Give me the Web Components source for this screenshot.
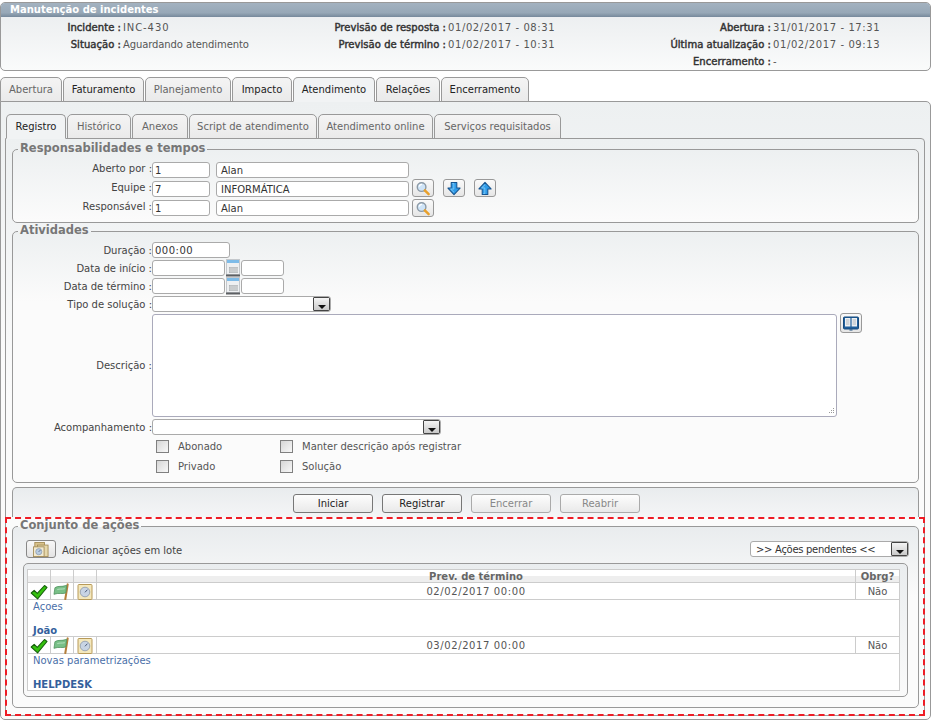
<!DOCTYPE html>
<html lang="pt">
<head>
<meta charset="utf-8">
<title>Manutenção de incidentes</title>
<style>
  html, body { margin: 0; background: #fff; }
  body { font: 10px "DejaVu Sans", Verdana, sans-serif; color: #444; }
  .gap6 { margin-left: 6px; }
  .gap3 { margin-left: 3px; }
  .gap9 { margin-left: 9px; }
  .up2 { margin-top: -2px; }
  .up1 { margin-top: -1px; }
  .num { letter-spacing: .6px; }
  form-row.tall { --row: 18px; }
</style>
</head>
<body>

<incident-page>
  <incident-header title="Manutenção de incidentes">
    <info-item label="Incidente" style="letter-spacing:.9px">INC-430</info-item>
    <info-item label="Previsão de resposta" class="num">01/02/2017 - 08:31</info-item>
    <info-item label="Abertura" class="num">31/01/2017 - 17:31</info-item>
    <info-item label="Situação" style="letter-spacing:-.1px">Aguardando atendimento</info-item>
    <info-item label="Previsão de término" class="num">01/02/2017 - 10:31</info-item>
    <info-item label="Última atualização" class="num">01/02/2017 - 09:13</info-item>
    <info-item></info-item>
    <info-item></info-item>
    <info-item label="Encerramento">-</info-item>
  </incident-header>

  <tab-strip style="margin-top:6px">
    <tab-item style="width:62px" muted>Abertura</tab-item>
    <tab-item style="width:81px">Faturamento</tab-item>
    <tab-item style="width:86px" muted>Planejamento</tab-item>
    <tab-item style="width:60px">Impacto</tab-item>
    <tab-item style="width:82px" active>Atendimento</tab-item>
    <tab-item style="width:64px">Relações</tab-item>
    <tab-item style="width:88px">Encerramento</tab-item>
  </tab-strip>

  <tab-panel outer>
    <tab-strip style="margin-left:1px">
      <tab-item style="width:60px" active>Registro</tab-item>
      <tab-item style="width:64px" muted>Histórico</tab-item>
      <tab-item style="width:56px" muted>Anexos</tab-item>
      <tab-item style="width:128px" muted>Script de atendimento</tab-item>
      <tab-item style="width:115px" muted>Atendimento online</tab-item>
      <tab-item style="width:127px" muted>Serviços requisitados</tab-item>
    </tab-strip>

    <tab-panel>
      <form-group legend="Responsabilidades e tempos" style="--pad:5px 6px 3px 0;--align:flex-start;--ll:14px">
        <form-row label="Aberto por">
          <text-box style="width:58px">1</text-box>
          <text-box class="gap6" style="width:193px;--ind:4px">Alan</text-box>
        </form-row>
        <form-row label="Equipe">
          <text-box style="width:58px">7</text-box>
          <text-box class="gap6" style="width:193px;--ind:4px">INFORMÁTICA</text-box>
          <icon-button class="gap3 up2" icon="search"></icon-button>
          <icon-button class="gap9 up2" icon="down"></icon-button>
          <icon-button class="gap9 up2" icon="up"></icon-button>
        </form-row>
        <form-row label="Responsável">
          <text-box style="width:58px">1</text-box>
          <text-box class="gap6" style="width:193px;--ind:4px">Alan</text-box>
          <icon-button class="gap3 up1" icon="search"></icon-button>
        </form-row>
      </form-group>

      <form-group legend="Atividades" style="margin-top:1px;--pad:2px 6px 6px 0">
        <form-row class="tall" label="Duração"><text-box style="width:78px;letter-spacing:.5px">000:00</text-box></form-row>
        <form-row class="tall" label="Data de início">
          <text-box style="width:73px"></text-box>
          <ui-icon name="calendar" style="width:14px;height:18px;margin-left:1px"></ui-icon>
          <text-box style="width:43px;margin-left:1px"></text-box>
        </form-row>
        <form-row class="tall" label="Data de término">
          <text-box style="width:73px"></text-box>
          <ui-icon name="calendar" style="width:14px;height:18px;margin-left:1px"></ui-icon>
          <text-box style="width:43px;margin-left:1px"></text-box>
        </form-row>
        <form-row class="tall" label="Tipo de solução"><select-box style="width:179px"></select-box></form-row>
        <form-row label="Descrição" style="--row:105px">
          <memo-box style="width:685px"></memo-box>
          <icon-button icon="book" style="margin:0 0 0 3px;align-self:flex-start;height:20px"></icon-button>
        </form-row>
        <form-row class="tall" label="Acompanhamento"><select-box style="width:289px"></select-box></form-row>
        <check-grid>
          <check-item>Abonado</check-item>
          <check-item>Manter descrição após registrar</check-item>
          <check-item>Privado</check-item>
          <check-item>Solução</check-item>
        </check-grid>
      </form-group>

      <button-bar>
        <push-button>Iniciar</push-button>
        <push-button>Registrar</push-button>
        <push-button disabled>Encerrar</push-button>
        <push-button disabled>Reabrir</push-button>
      </button-bar>

      <highlight-frame>
        <form-group legend="Conjunto de ações" style="--pad:6px 10px 10px 10px;--lm:-5px;--top:#e9ecee">
          <action-toolbar></action-toolbar>
          <action-table>
            <action-row date="02/02/2017 00:00" required="Não" desc="Açoes" owner="João"></action-row>
            <action-row date="03/02/2017 00:00" required="Não" desc="Novas parametrizações" owner="HELPDESK"></action-row>
          </action-table>
        </form-group>
      </highlight-frame>
    </tab-panel>
  </tab-panel>
</incident-page>

<script>
// small helper, every element gets its own open shadow root
function define(name, css, html) {
  customElements.define(name, class extends HTMLElement {
    connectedCallback() {
      if (this.shadowRoot) return;
      const root = this.attachShadow({ mode: 'open' });
      const body = typeof html === 'function' ? html(this) : html;
      root.innerHTML = '<style>:host,*{box-sizing:border-box}' + css + '</style>' + body;
    }
  });
}

const ICONS = {
  search: `<svg viewBox="0 0 16 16"><circle cx="6.5" cy="6.5" r="4.6" fill="#cfe4f7" stroke="#8c9aa6" stroke-width="1.5"/><path d="M4 6a3 3 0 0 1 3-2.4" fill="none" stroke="#fff" stroke-width="1.2"/><path d="M10 10l4 4" stroke="#e8a02c" stroke-width="2.6" stroke-linecap="round"/></svg>`,
  down: `<svg viewBox="0 0 16 16"><path d="M5 1.5h6v6h3.5L8 14.5 1.5 7.5H5z" fill="#2f9be8" stroke="#14538f" stroke-width="1.1" stroke-linejoin="round"/><path d="M6.2 2.6h1.6v6H4.4L8 12" fill="none" stroke="#8fd0f7" stroke-width=".8"/></svg>`,
  up: `<svg viewBox="0 0 16 16"><path d="M5 14.5h6v-6h3.5L8 1.5 1.5 8.5H5z" fill="#2f9be8" stroke="#14538f" stroke-width="1.1" stroke-linejoin="round"/><path d="M6.2 13.4h1.6v-6H4.4L8 4" fill="none" stroke="#8fd0f7" stroke-width=".8"/></svg>`,
  book: `<svg viewBox="0 0 16 14"><rect x=".5" y=".5" width="15" height="12" rx="1" fill="#1f5f9c" stroke="#174a7c"/><path d="M2 1.5h5.400v8.500H2zM8.600 1.500H14v8.500H8.600z" fill="#eef1f3"/><path d="M3 3.500h3.400M3 5.500h3.400M3 7.500h3.400M9.600 3.500H13M9.600 5.500H13M9.600 7.500H13" stroke="#a9b2ba" stroke-width=".9"/><path d="M6.500 13h3v1h-3z" fill="#174a7c"/></svg>`,
  calendar: `<svg viewBox="0 0 14 18"><rect x=".5" y=".5" width="13" height="15" fill="#eef0f2" stroke="#c4c8cc"/><rect x="1" y="1" width="12" height="3" fill="#7dbbe8"/><path d="M3 8h9v6H3z" fill="#aeb2b6"/><path d="M3 10h9M3 12h9M5 8v6M7 8v6M9 8v6M11 8v6" stroke="#e4e5e6" stroke-width=".6"/><rect y="15.500" width="14" height="2" fill="#5c5f62"/></svg>`,
  check: `<svg viewBox="0 0 18 16"><path d="M1.200 9l3-2.700 3.100 3L14.500 1.500 17 3.500 7.600 14.800z" fill="#35c20e" stroke="#17610c" stroke-width="1.100" stroke-linejoin="round"/></svg>`,
  flag: `<svg viewBox="0 0 18 18"><path d="M15 1.500l-2.500 15.500" stroke="#b57f3b" stroke-width="2.200" stroke-linecap="round"/><path d="M1.500 5c3.500-2.500 6.500-.4 12.500-2.500l-1 8c-4 1.600-7.500-.5-12.500 1.500z" fill="#79c088" stroke="#4d8f5b" stroke-width=".8"/><path d="M4 7c2.500-1 5-.2 8-1" stroke="#b7e0bf" stroke-width="1" fill="none"/></svg>`,
  clock: `<svg viewBox="0 0 16 16"><rect x="1" y=".5" width="14" height="15" rx="1" fill="#f4e8bd" stroke="#b89a58"/><circle cx="8" cy="8" r="4.800" fill="#c8d4e4" stroke="#8c98aa" stroke-width=".8"/><path d="M8 8.300l2.400-2.600" stroke="#4a5b78" stroke-width="1"/></svg>`,
  batch: `<svg viewBox="0 0 18 17"><rect x="2" y=".5" width="11" height="12" fill="#d9c28c" stroke="#a48c56"/><rect x="5" y="3.500" width="12" height="13" fill="#e6d8ac" stroke="#a48c56"/><rect x=".5" y="5.500" width="12" height="11" fill="#f2ead0" stroke="#a48c56"/><circle cx="6.500" cy="11" r="3.500" fill="#b8cbe0" stroke="#7f8fa5" stroke-width=".7"/><path d="M6.500 11l1.700-1.700" stroke="#3f4f6b"/></svg>`
};

define('ui-icon', ':host{display:inline-block;line-height:0;flex:none}svg{width:100%;height:100%;display:block}',
  el => ICONS[el.getAttribute('name')]);

define('incident-page', ':host{display:block;padding-top:2px;width:931px}', '<slot></slot>');

define('incident-header', `
  :host{display:block;height:69px;border:1px solid #999;border-radius:5px;overflow:hidden;
    background:linear-gradient(#e9ecee,#fafbfb)}
  h1{margin:0;height:14px;padding:0 0 0 9px;font:bold 10px/14px "DejaVu Sans",sans-serif;color:#fff;
    background:linear-gradient(#a3b2c0 0,#97a8b7 70%,#76899b 100%)}
  .grid{display:grid;grid-template-columns:325px 325px 1fr;padding-top:2px}
`, el => `<h1>${el.getAttribute('title')}</h1><div class="grid"><slot></slot></div>`);

define('info-item', `
  :host{display:grid;grid-template-columns:120px 1fr;column-gap:2px;height:17px;line-height:17px;white-space:nowrap;color:#555}
  b{justify-self:end;color:#333;font-weight:normal;letter-spacing:.05px;-webkit-text-stroke:.45px #333}
`, el => el.hasAttribute('label') ? `<b>${el.getAttribute('label')} :</b><span><slot></slot></span>` : '');

define('tab-strip', ':host{display:flex;gap:1px;height:24px;position:relative;z-index:1}', '<slot></slot>');

define('tab-item', `
  :host{display:block;height:25px;border:1px solid #999;border-radius:5px 5px 0 0;
    background:linear-gradient(#f4f4f4,#eaeaea);text-align:center;line-height:24px;color:#222;white-space:nowrap}
  :host([muted]){color:#666}
  :host([active]){background:#f1f3f4;border-bottom-color:#f1f3f4;color:#222}
`, '<slot></slot>');

define('tab-panel', `
  :host{display:block;border:1px solid #999;border-radius:0 4px 4px 4px;
    background:linear-gradient(#edf0f1,#fbfbfb 260px);padding:3px 5px 0 6px;height:578px}
  :host([outer]){border-radius:0 5px 5px 5px;padding:12px 5px 0 4px;height:619px}
`, '<slot></slot>');

define('form-group', `
  :host{display:block}
  fieldset{margin:0;min-width:0;border:1px solid #999;border-radius:5px;padding:var(--pad,6px);
    background:linear-gradient(var(--top,#edf0f1),#fbfbfb 70px)}
  legend{margin-left:var(--lm,5px);padding:0 2px 3px;font:bold 11.5px/12px "DejaVu Sans",sans-serif;color:#777}
`, el => `<fieldset><legend>${el.getAttribute('legend')}</legend><slot></slot></fieldset>`);

define('form-row', `
  :host{display:flex;align-items:var(--align,center);height:var(--row,19px);white-space:nowrap}
  label{flex:none;width:139px;text-align:right;color:#444;line-height:var(--ll,normal)}
`, el => `<label>${el.getAttribute('label')} :</label><slot></slot>`);

define('text-box', `
  :host{display:block;flex:none;height:16px;border:1px solid #aaa;border-radius:3px;background:#fff;
    padding-left:var(--ind,2px);line-height:15px;color:#333;white-space:nowrap;overflow:hidden}
`, '<slot></slot>');

define('memo-box', `
  :host{display:block;flex:none;height:103px;border:1px solid #aab;border-radius:3px;background:#fff;position:relative}
  svg{position:absolute;right:1px;bottom:1px;width:8px;height:8px}
`, '<svg viewBox="0 0 8 8" fill="#999"><rect x="6" y="1" width="1" height="1"/><rect x="4" y="3" width="1" height="1"/><rect x="6" y="3" width="1" height="1"/><rect x="2" y="5" width="1" height="1"/><rect x="4" y="5" width="1" height="1"/><rect x="6" y="5" width="1" height="1"/></svg>');

define('select-box', `
  :host{display:flex;flex:none;height:16px;border:1px solid #aaa;border-radius:3px;background:#fff;
    padding-left:var(--ind,1px);line-height:15px;color:#333;overflow:hidden;white-space:nowrap}
  span{flex:1}
  i{flex:none;width:17px;height:14px;border:1px solid #444;border-radius:1px;background:linear-gradient(#f4f4f4,#c9c9c9);position:relative}
  i::after{content:"";position:absolute;left:4px;top:7px;border:4px solid transparent;border-top:4px solid #111;border-bottom:0}
`, '<span><slot></slot></span><i></i>');

define('icon-button', `
  :host{display:flex;flex:none;align-items:center;justify-content:center;width:22px;height:18px;
    border:1px solid #999;border-radius:3px;background:linear-gradient(#fafafa,#e6e6e6)}
  ui-icon{width:16px;height:15px}
`, el => `<ui-icon name="${el.getAttribute('icon')}"></ui-icon>`);

define('check-grid', `
  :host{display:grid;grid-template-columns:124px 1fr;margin:0 0 0 143px}
`, '<slot></slot>');

define('check-item', `
  :host{display:flex;align-items:center;height:20px;white-space:nowrap;color:#555}
  i{flex:none;width:13px;height:13px;margin-right:9px;border:1px solid #808080;background:linear-gradient(135deg,#d6d6d6,#f8f8f8)}
`, '<i></i><slot></slot>');

define('button-bar', `
  :host{display:flex;justify-content:center;gap:9px;height:30px;margin-top:4px;padding:6px 0 0 2px;
    border:1px solid #999;border-bottom:0;border-radius:5px 5px 0 0;background:linear-gradient(#e9ecee,#f4f5f6)}
`, '<slot></slot>');

define('push-button', `
  :host{display:block;width:80px;height:19px;border:1px solid #777;border-radius:3px;text-align:center;line-height:18px;color:#222;
    background:linear-gradient(#fdfdfd,#e9e9e9)}
  :host([disabled]){color:#888;border-color:#aaa}
`, '<slot></slot>');

define('highlight-frame', `
  :host{display:block;margin:0 -6px 0 -7px;height:199px;border:2px dashed #ee1c25;padding:0 4px 0 5px;position:relative}
`, '<slot></slot>');

define('action-toolbar', `
  :host{display:flex;align-items:center;height:18px;padding-left:3px;margin-right:-1px}
  button{all:unset;box-sizing:border-box;display:flex;align-items:center;justify-content:center;width:30px;height:18px;
    border:1px solid #888;border-radius:3px;background:linear-gradient(#f8f8f8,#e4e4e4)}
  ui-icon{width:16px;height:15px}
  span{margin-left:6px;padding-top:2px;flex:1;color:#444}
  select-box{width:159px;--ind:5px;letter-spacing:-.3px}
`, '<button><ui-icon name="batch"></ui-icon></button><span>Adicionar ações em lote</span><select-box>&gt;&gt; Ações pendentes &lt;&lt;</select-box>');

define('action-table', `
  :host{display:block;margin-top:5px;padding:5px 7px 5px 3px;border:1px solid #999;border-radius:5px;
    background:linear-gradient(#eaedef,#fafafa)}
  .box{border:1px solid #ccc;border-bottom:0;background:#fff}
  .head{display:grid;grid-template-columns:22px 23px 23px 1fr 44px;height:13px;border-bottom:1px solid #ccc;
    background:linear-gradient(#fff 0,#fff 50%,#eee 50%);font-weight:bold;color:#666;line-height:13px;text-align:center}
  .head span{border-left:1px solid #ccc}
  .head span:first-child{border-left:0}
`, `<div class="box"><div class="head"><span></span><span></span><span></span><span>Prev. de término</span><span>Obrg?</span></div><slot></slot></div>`);

define('action-row', `
  :host{display:block}
  .top{display:grid;grid-template-columns:22px 23px 23px 1fr 44px;height:17px;border-bottom:1px solid #ccc;text-align:center;line-height:17px;color:#555}
  .top>*{border-left:1px solid #ccc}
  .top>:first-child{border-left:0}
  .top div{display:flex;align-items:center;justify-content:center}
  .date{letter-spacing:.6px}
  .c{width:18px;height:16px}
  .f{width:18px;height:17px}
  .k{width:16px;height:16px}
  .info{height:37px;border-bottom:1px solid #ccc;padding-left:5px;color:#4a6fa8;line-height:13px}
  .desc{display:block;height:24px}
  b{display:block;color:#34609c;line-height:13px}
`, el => `<div class="top">
    <div><ui-icon class="c" name="check"></ui-icon></div><div><ui-icon class="f" name="flag"></ui-icon></div><div><ui-icon class="k" name="clock"></ui-icon></div>
    <span class="date">${el.getAttribute('date')}</span><span>${el.getAttribute('required')}</span>
  </div>
  <div class="info"><span class="desc">${el.getAttribute('desc')}</span><b>${el.getAttribute('owner')}</b></div>`);
</script>
</body>
</html>
